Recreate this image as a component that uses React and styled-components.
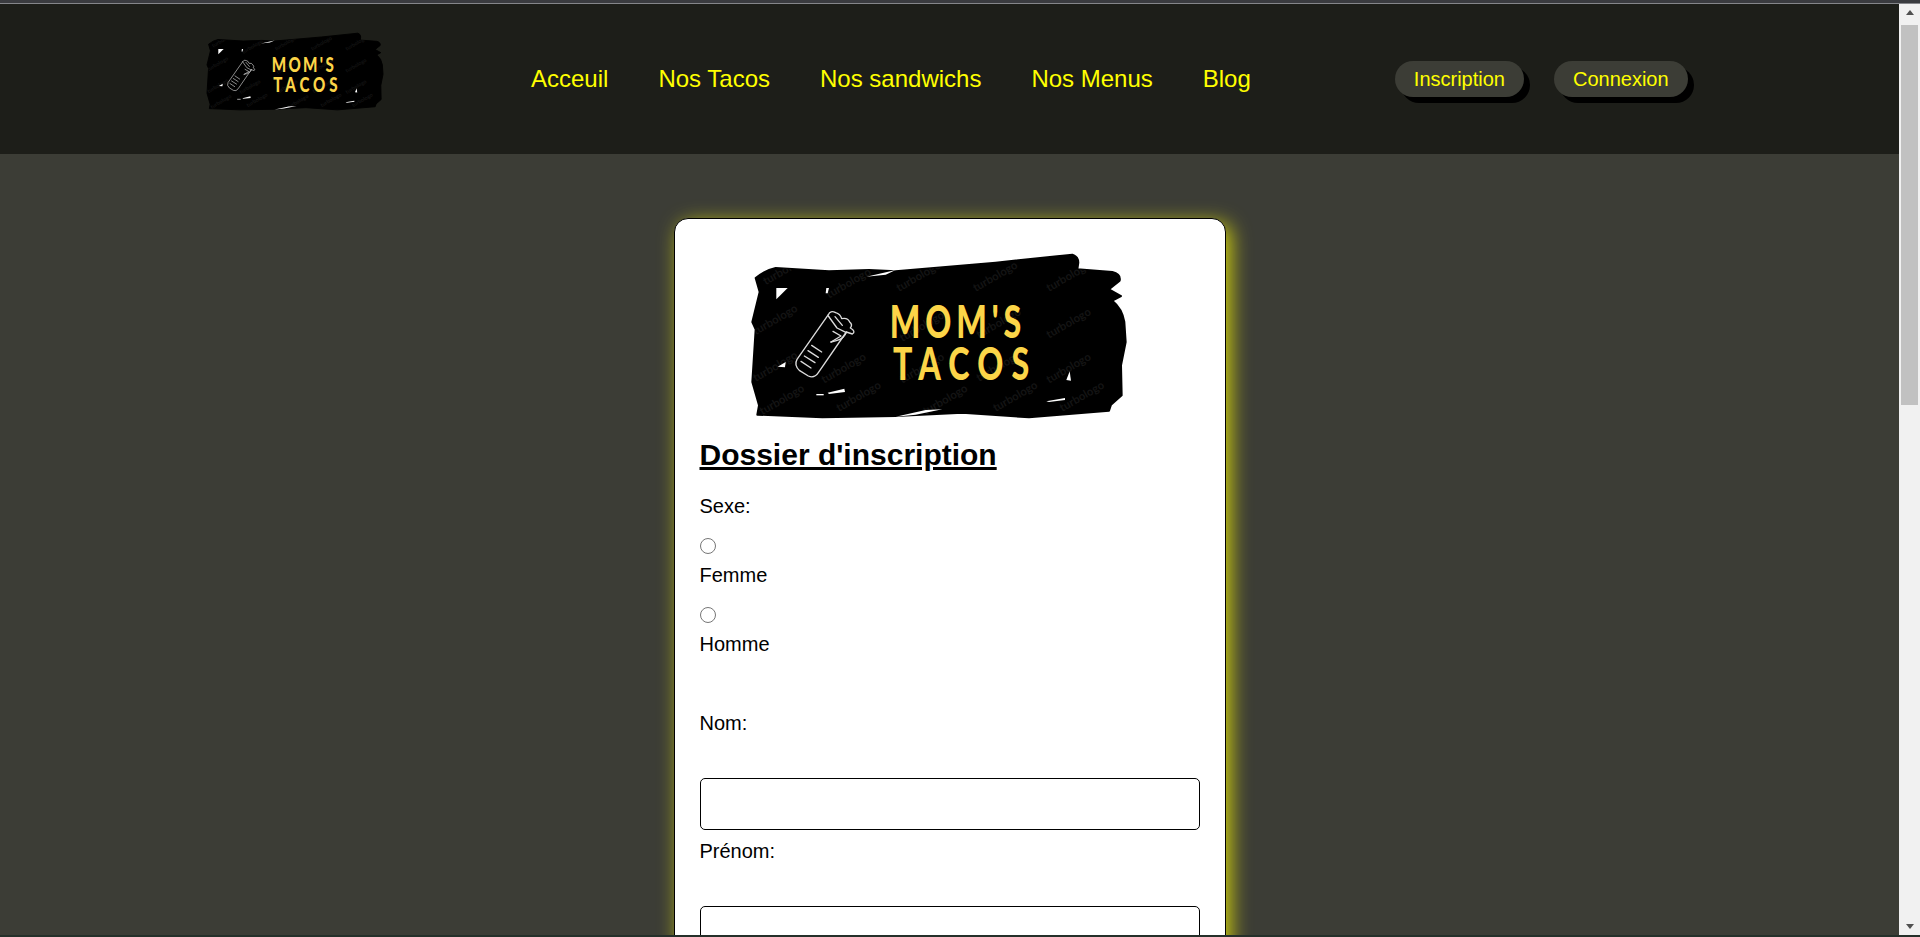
import styled, { createGlobalStyle } from "styled-components";

const GlobalStyle = createGlobalStyle`
  html, body {
    margin: 0;
    height: 100%;
    overflow: hidden;
  }
  body {
    font-family: "Liberation Sans", Arial, sans-serif;
    background-color: #3c3d36;
  }
`;

const navLinks = ["Acceuil", "Nos Tacos", "Nos sandwichs", "Nos Menus", "Blog"];

const watermarks = [
  [110, 130], [510, 150], [740, 150], [960, 150],
  [80, 280], [300, 170], [520, 300], [750, 290], [960, 290],
  [80, 420], [285, 425], [520, 425], [750, 420], [960, 425],
  [100, 520], [330, 510], [590, 520], [800, 510], [1000, 510],
];

const blotch =
  "M80 108 Q110 84 140 78 L300 88 L420 84 L500 88 L800 62 L1030 38 Q1048 44 1048 62 L1045 82 L1150 90 Q1176 96 1172 116 L1140 142 L1176 162 L1150 176 Q1180 200 1186 240 L1190 300 L1176 370 L1178 460 L1146 488 L1140 506 L900 526 L700 512 L500 522 L280 526 L85 518 L90 490 L70 420 L80 262 L70 240 L92 150 Z";

const Logo = ({ small, id }) => (
  <LogoImage small={small} viewBox="0 0 1260 570" aria-label="Mom's Tacos">
    <defs>
      <clipPath id={id}>
        <path d={blotch} />
      </clipPath>
    </defs>
    <path fill="#000" stroke="#000" strokeWidth="6" strokeLinejoin="round" d={blotch} />
    <g clipPath={`url(#${id})`}>
      {watermarks.map(([x, y]) => (
        <text
          key={`${x}-${y}`}
          x={x}
          y={y}
          transform={`rotate(-30 ${x} ${y})`}
          fill="#141414"
          fontFamily="Lato, sans-serif"
          fontWeight="700"
          fontSize="34"
        >
          turbologo
        </text>
      ))}
    </g>
    <g fill="#fff">
      <path d="M142 138 L176 138 L142 172 Z" />
      <path d="M292 138 L300 138 L296 154 L290 154 Z" />
      <path d="M146 374 L170 360 L168 376 Z" />
      <path d="M296 452 L346 440 L348 450 L300 456 Z" />
      <path d="M262 456 L284 456 L284 460 L262 460 Z" />
      <path d="M952 478 L1008 468 L1008 474 L960 480 Z" />
      <path d="M1012 414 L1022 388 L1026 416 Z" />
      <path d="M500 524 L590 504 L640 502 L560 518 Z" />
      <path d="M412 104 L500 84 L470 98 Z" />
    </g>
    <g fill="none" stroke="#dcdcdc" strokeWidth="4" strokeLinejoin="round" strokeLinecap="round">
      <path d="M298 218 L204 352 Q194 370 212 386 L238 402 Q256 410 268 392 L352 270" />
      <path d="M298 218 Q304 204 320 212 Q334 216 338 230 Q356 226 362 240 Q372 248 364 258 Q382 268 370 276 L352 270 Q346 290 322 296 L306 300" />
      <path d="M298 222 L324 258 L352 272 M318 224 L340 250 M312 268 L336 282 L306 300" />
      <path d="M248 310 L278 330 M237 326 L268 346 M226 342 L258 362 M216 358 L246 378" />
    </g>
    <g fill="#fcd548" fontFamily="Lato, sans-serif" fontWeight="900" fontSize="138">
      <text transform="translate(482 288) scale(.7 1)" letterSpacing="21">MOM'S</text>
      <text transform="translate(492 414) scale(.7 1)" letterSpacing="35">TACOS</text>
    </g>
  </LogoImage>
);

const App = () => {
  return (
    <>
      <GlobalStyle />
      <Window>
        <TopStrip />
        <Viewport>
          <Page>
            <Header>
              <HeaderLogo>
                <Logo small id="blotch-small" />
              </HeaderLogo>
              <Nav>
                {navLinks.map((link) => (
                  <NavLink key={link}>{link}</NavLink>
                ))}
              </Nav>
              <Actions>
                <PillButton>Inscription</PillButton>
                <PillButton>Connexion</PillButton>
              </Actions>
            </Header>
            <Main>
              <Card>
                <CardLogo>
                  <Logo id="blotch-large" />
                </CardLogo>
                <Title>Dossier d'inscription</Title>
                <Field>Sexe:</Field>
                <RadioRow>
                  <Radio type="radio" name="sexe" />
                  <span>Femme</span>
                </RadioRow>
                <RadioRow>
                  <Radio type="radio" name="sexe" />
                  <span>Homme</span>
                </RadioRow>
                <TextLabel spaced>Nom:</TextLabel>
                <TextInput type="text" />
                <TextLabel>Prénom:</TextLabel>
                <TextInput type="text" />
              </Card>
            </Main>
          </Page>
          <Scrollbar>
            <ScrollArrow />
            <ScrollTrack>
              <ScrollThumb />
            </ScrollTrack>
            <ScrollArrow down />
          </Scrollbar>
        </Viewport>
        <BottomStrip />
      </Window>
    </>
  );
};

export default App;

const Window = styled.div`
  height: 937px;
  display: flex;
  flex-direction: column;
  overflow: hidden;
`;

const TopStrip = styled.div`
  height: 4px;
  flex-shrink: 0;
  background-color: #3a3b3f;
  border-bottom: 1px solid #85868a;
  box-sizing: border-box;
`;

const BottomStrip = styled.div`
  height: 2px;
  flex-shrink: 0;
  background-color: #25302a;
`;

const Viewport = styled.div`
  flex: 1;
  min-height: 0;
  display: flex;
`;

const Page = styled.div`
  flex: 1;
  min-width: 0;
  overflow: hidden;
`;

const Header = styled.header`
  height: 150px;
  background-color: #1d1e19;
  display: flex;
  align-items: center;
`;

const HeaderLogo = styled.div`
  width: 198px;
  margin-left: 196px;
  margin-top: -14px;
`;

const LogoImage = styled.svg`
  display: block;
  width: ${(props) => (props.small ? "198px" : "420px")};
  height: ${(props) => (props.small ? "90px" : "190px")};
`;

const Nav = styled.nav`
  display: flex;
  gap: 50px;
  margin-left: 137px;
`;

const NavLink = styled.a`
  color: #ffff00;
  font-size: 24px;
  cursor: pointer;
`;

const Actions = styled.div`
  display: flex;
  gap: 30px;
  margin-left: 144px;
`;

const PillButton = styled.button`
  height: 36px;
  padding: 0 19px;
  border: none;
  border-radius: 18px;
  background-color: #3c3d36;
  color: #ffff00;
  font-family: inherit;
  font-size: 20px;
  box-shadow: 6px 6px 0 #000;
`;

const Main = styled.main`
  display: flex;
  justify-content: center;
  padding-top: 64px;
`;

const Card = styled.section`
  width: 552px;
  box-sizing: border-box;
  padding: 0 25px 200px 25px;
  background-color: #fff;
  border: 1px solid #000;
  border-radius: 14px;
  box-shadow: 5px 5px 20px rgba(255, 255, 0, 0.75);
  color: #000;
  font-size: 20px;
`;

const CardLogo = styled.div`
  margin: 23px 0 0 29px;
`;

const Title = styled.h2`
  margin: 5px 0 0;
  font-size: 30px;
  line-height: 35px;
  text-decoration: underline;
`;

const Field = styled.div`
  margin-top: 23px;
  line-height: 23px;
`;

const RadioRow = styled.label`
  display: block;
  margin-top: 20px;
  line-height: 23px;

  span {
    display: block;
    margin-top: 10px;
  }
`;

const Radio = styled.input`
  display: block;
  width: 16px;
  height: 16px;
  margin: 0;
`;

const TextLabel = styled.label`
  display: block;
  line-height: 23px;
  margin-top: ${(props) => (props.spaced ? "56px" : "10px")};
`;

const TextInput = styled.input`
  display: block;
  width: 100%;
  height: 52px;
  box-sizing: border-box;
  margin-top: 43px;
  border: 1px solid #000;
  border-radius: 5px;
`;

const Scrollbar = styled.div`
  width: 21px;
  flex-shrink: 0;
  background-color: #f1f1f1;
  display: flex;
  flex-direction: column;
`;

const ScrollArrow = styled.div`
  height: 17px;
  display: flex;
  align-items: center;
  justify-content: center;

  &::before {
    content: "";
    border-left: 4px solid transparent;
    border-right: 4px solid transparent;
    ${(props) =>
      props.down
        ? "border-top: 5px solid #505050;"
        : "border-bottom: 5px solid #505050;"}
  }
`;

const ScrollTrack = styled.div`
  flex: 1;
  padding: 4px 2px 0;
`;

const ScrollThumb = styled.div`
  height: 380px;
  background-color: #c1c1c1;
`;
